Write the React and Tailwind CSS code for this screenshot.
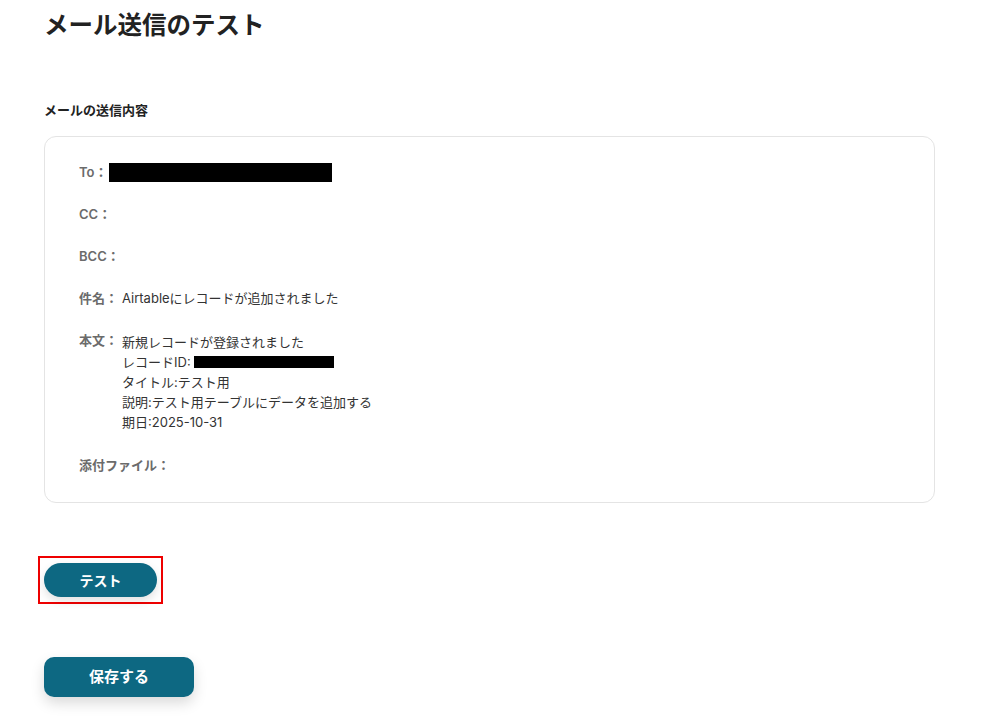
import React from 'react';

const fontStack = { fontFamily: 'Inter, "Noto Sans CJK JP", sans-serif' };

const Row = ({ label, children, className = '' }) => (
  <div className={`flex items-start leading-[20px] ${className}`}>
    <span className="text-[13px] font-semibold text-[#6b6b6b] whitespace-nowrap mr-[4px]">{label}</span>
    <div className="text-[13px] text-[#333333]">{children}</div>
  </div>
);

const App = () => {
  return (
    <div className="min-h-[718px] bg-white px-[44px] pt-[6px]" style={fontStack}>
      <h1 className="text-[24.5px] font-bold text-[#222222] leading-[38px]">メール送信のテスト</h1>

      <h2 className="mt-[56px] text-[13px] font-bold text-[#222222] leading-[20px]">メールの送信内容</h2>

      <div className="mt-[16px] w-[891px] rounded-[12px] border border-[#e4e4e4] px-[34px] pt-[25px] pb-[27px]">
        <div className="flex flex-col gap-[22px]">
          <Row label="To：">
            <div className="-ml-[2px] mt-[1px] h-[19px] w-[223px] bg-black" />
          </Row>
          <Row label="CC：" />
          <Row label="BCC：" />
          <Row label="件名：">Airtableにレコードが追加されました</Row>
          <Row label="本文：">
            <div className="pt-[2px]">
              <p>新規レコードが登録されました</p>
              <p className="flex items-center">
                レコードID:
                <span className="ml-[3px] inline-block h-[12px] w-[140px] bg-black" />
              </p>
              <p>タイトル:テスト用</p>
              <p>説明:テスト用テーブルにデータを追加する</p>
              <p>期日:2025-10-31</p>
            </div>
          </Row>
          <Row label="添付ファイル：" className="mt-[1px]" />
        </div>
      </div>

      <div className="-ml-[6px] mt-[53px] inline-block border-2 border-[#ee0000] px-[4px] py-[5px]">
        <button className="block h-[34px] w-[113px] rounded-full bg-[#0d6882] text-[14px] font-bold text-white shadow-[0_4px_10px_rgba(0,0,0,0.12)]">
          テスト
        </button>
      </div>

      <div className="mt-[53px]">
        <button className="h-[40px] w-[150px] rounded-[10px] bg-[#0d6882] text-[15px] font-bold text-white shadow-[0_6px_14px_rgba(0,0,0,0.15)]">
          保存する
        </button>
      </div>
    </div>
  );
};

export default App;
